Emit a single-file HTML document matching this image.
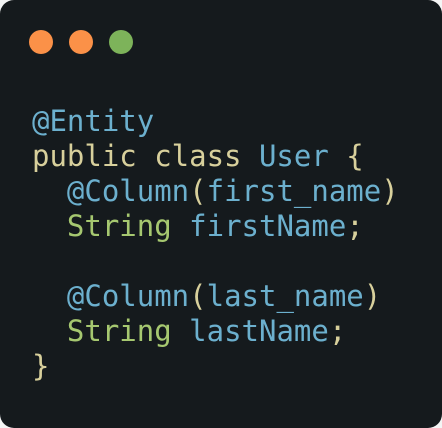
<!DOCTYPE html>
<html><head><meta charset="utf-8"><style>
html,body{margin:0;padding:0;width:442px;height:428px;background:#f4f5f5;overflow:hidden}
.win{position:absolute;left:0;top:0;width:442px;height:428px;background:#151a1d;border-radius:14px}
.dot{position:absolute;top:30px;width:24px;height:24px;border-radius:50%}
pre{position:absolute;left:32px;top:104px;margin:0;font-family:"DejaVu Sans Mono","Liberation Mono",monospace;font-size:29px;line-height:35px;color:#6cb0ce}
.y{color:#d8d09c}.g{color:#a6c870}
</style></head><body><div class="win">
<div class="dot" style="left:29px;background:#fb9148"></div>
<div class="dot" style="left:69px;background:#fb9148"></div>
<div class="dot" style="left:109px;background:#7db35a"></div>
<pre>@Entity
<span class="y">public class</span> User <span class="y">{</span>
  @Column<span class="y">(</span>first_name<span class="y">)</span>
  <span class="g">String</span> firstName<span class="y">;</span>

  @Column<span class="y">(</span>last_name<span class="y">)</span>
  <span class="g">String</span> lastName<span class="y">;</span>
<span class="y">}</span></pre>
</div></body></html>
